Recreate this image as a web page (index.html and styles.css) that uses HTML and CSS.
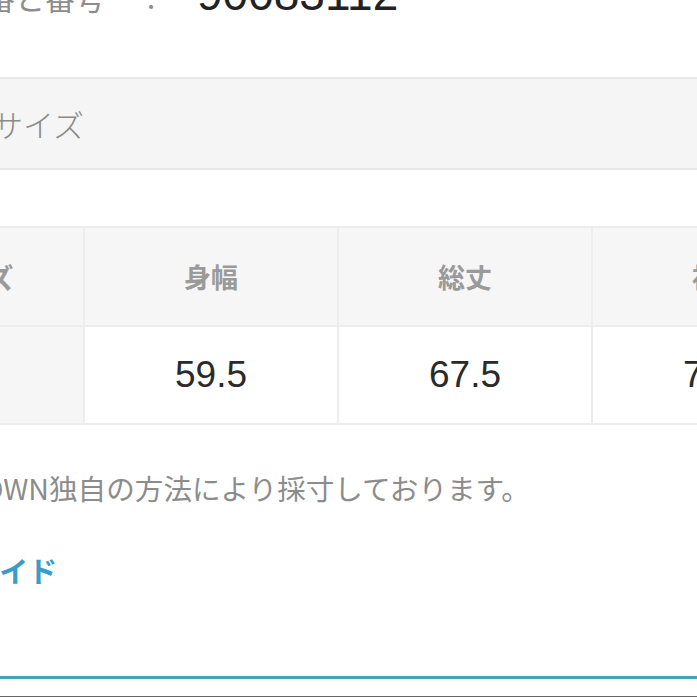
FILE: index.html
```html
<!DOCTYPE html>
<html lang="ja">
<head>
    <meta charset="UTF-8">
    <meta name="viewport" content="width=device-width, initial-scale=1.0">
    <title>サイズ情報</title>
    <link rel="stylesheet" href="styles.css">
</head>
<body>
    <div class="page">
        <div class="item-number">
            <span class="item-number-label">ブランド品番と番号</span>
            <span class="item-number-colon">：</span>
            <span class="item-number-value">90083112</span>
        </div>

        <div class="section-title">サイズ</div>

        <table class="size-table">
            <tr>
                <th class="size-label">サイズ</th>
                <th>身幅</th>
                <th>総丈</th>
                <th>袖丈</th>
            </tr>
            <tr>
                <td class="size-label">F</td>
                <td>59.5</td>
                <td>67.5</td>
                <td>72.5</td>
            </tr>
        </table>

        <p class="size-note">※ZOZOTOWN独自の方法により採寸しております。</p>

        <a class="size-guide" href="#">サイズガイド</a>
    </div>

    <div class="footer-line"></div>
</body>
</html>
```

FILE: styles.css
```css
* {
    margin: 0;
    padding: 0;
    box-sizing: border-box;
}

html, body {
    width: 697px;
    height: 697px;
    overflow: hidden;
}

body {
    font-family: "Noto Sans CJK JP", "Liberation Sans", sans-serif;
    background: #fff;
    color: #333;
    position: relative;
}

.page {
    margin-left: -141px;
    width: 1000px;
}

.item-number {
    display: flex;
    align-items: baseline;
    margin-top: -28px;
    height: 42px;
}

.item-number-label {
    width: 246px;
    display: flex;
    justify-content: flex-end;
    white-space: nowrap;
    font-size: 30px;
    color: #8c8c8c;
    line-height: 45px;
}

.item-number-colon {
    width: 92px;
    text-align: center;
    font-size: 26px;
    color: #8c8c8c;
}

.item-number-value {
    font-family: "Liberation Sans", sans-serif;
    font-size: 46px;
    line-height: 45px;
    color: #222;
}

.section-title {
    margin-top: 63px;
    height: 93px;
    background: #f5f5f5;
    border-top: 2px solid #e8e8e8;
    border-bottom: 2px solid #e8e8e8;
    padding-left: 133px;
    display: flex;
    align-items: center;
    font-size: 31px;
    font-weight: 300;
    color: #8a8a8a;
}

.size-table {
    margin-top: 56px;
    border-collapse: collapse;
    table-layout: fixed;
}

.size-table th,
.size-table td {
    border: 2px solid #ededed;
    width: 254px;
    text-align: center;
}

.size-table th {
    height: 99px;
    background: #f6f6f6;
    font-size: 27px;
    font-weight: 700;
    color: #9a9a9a;
}

.size-table td {
    height: 98px;
    background: #fff;
    font-family: "Liberation Sans", sans-serif;
    font-size: 37px;
    color: #2a2a2a;
}

.size-table .size-label {
    width: 224px;
    background: #f6f6f6;
    font-family: "Noto Sans CJK JP", sans-serif;
    font-size: 28px;
    font-weight: 700;
    color: #9a9a9a;
}

.size-note {
    margin-top: 43px;
    padding-left: 4px;
    font-size: 28.6px;
    line-height: 40px;
    color: #8c8c8c;
    white-space: nowrap;
}

.size-guide {
    display: block;
    margin-top: 42px;
    padding-left: 25px;
    font-size: 29px;
    line-height: 40px;
    font-weight: 700;
    color: #3a9dc8;
    text-decoration: none;
}

.footer-line {
    position: absolute;
    left: 0;
    right: 0;
    top: 676px;
    height: 3px;
    background: #4ba2b6;
    box-shadow: 0 0 2px rgba(120, 220, 240, 0.6);
}

body::after {
    content: "";
    position: absolute;
    left: 0;
    right: 0;
    bottom: 0;
    height: 1px;
    background: #666;
}
```
